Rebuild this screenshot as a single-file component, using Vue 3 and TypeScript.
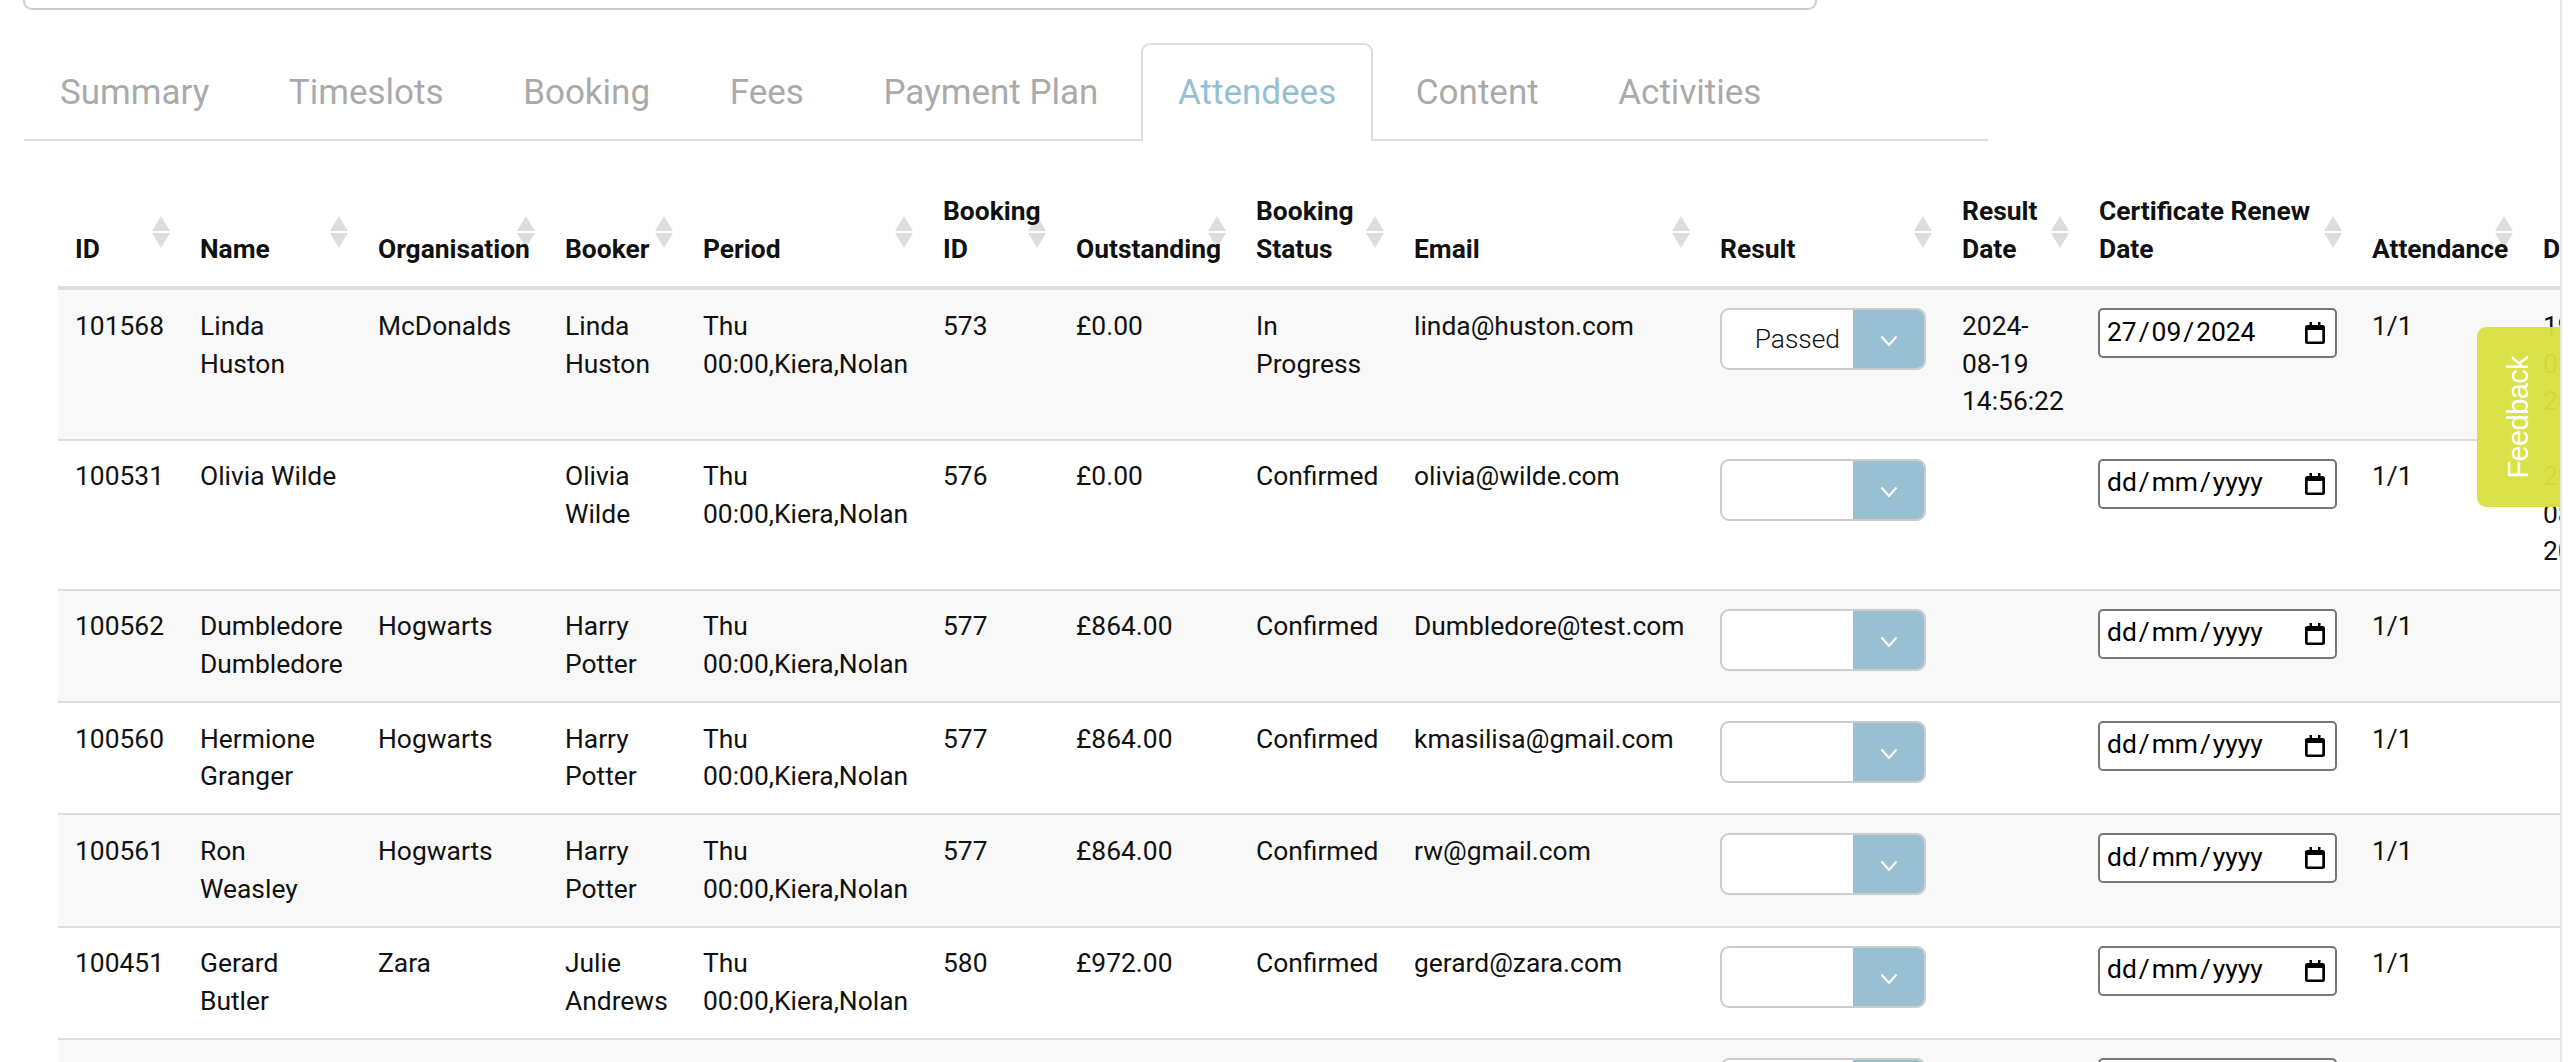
<script setup lang="ts">
interface Col { label: string[]; width: number }
interface Row { id: string; name: string[]; org: string; booker: string[]; bid: string; out: string; status: string[]; email: string; result: string; rdate: string[]; date: string[]; att: string; last: string[] }

const cols: Col[] = [
  { label: ['ID'], width: 125 },
  { label: ['Name'], width: 178 },
  { label: ['Organisation'], width: 187 },
  { label: ['Booker'], width: 138 },
  { label: ['Period'], width: 240 },
  { label: ['Booking', 'ID'], width: 133 },
  { label: ['Outstanding'], width: 180 },
  { label: ['Booking', 'Status'], width: 158 },
  { label: ['Email'], width: 306 },
  { label: ['Result'], width: 242 },
  { label: ['Result', 'Date'], width: 137 },
  { label: ['Certificate Renew', 'Date'], width: 273 },
  { label: ['Attendance'], width: 171 },
  { label: ['Date'], width: 160 }
]

const blank = ['dd', 'mm', 'yyyy']
const rows: Row[] = [
  { id: '101568', name: ['Linda', 'Huston'], org: 'McDonalds', booker: ['Linda', 'Huston'], bid: '573', out: '£0.00', status: ['In', 'Progress'], email: 'linda@huston.com', result: 'Passed', rdate: ['2024-', '08-19', '14:56:22'], date: ['27', '09', '2024'], att: '1/1', last: ['19-', '08-', '2024'] },
  { id: '100531', name: ['Olivia Wilde'], org: '', booker: ['Olivia', 'Wilde'], bid: '576', out: '£0.00', status: ['Confirmed'], email: 'olivia@wilde.com', result: '', rdate: [], date: blank, att: '1/1', last: ['20-', '08-', '2024'] },
  { id: '100562', name: ['Dumbledore', 'Dumbledore'], org: 'Hogwarts', booker: ['Harry', 'Potter'], bid: '577', out: '£864.00', status: ['Confirmed'], email: 'Dumbledore@test.com', result: '', rdate: [], date: blank, att: '1/1', last: [] },
  { id: '100560', name: ['Hermione', 'Granger'], org: 'Hogwarts', booker: ['Harry', 'Potter'], bid: '577', out: '£864.00', status: ['Confirmed'], email: 'kmasilisa@gmail.com', result: '', rdate: [], date: blank, att: '1/1', last: [] },
  { id: '100561', name: ['Ron', 'Weasley'], org: 'Hogwarts', booker: ['Harry', 'Potter'], bid: '577', out: '£864.00', status: ['Confirmed'], email: 'rw@gmail.com', result: '', rdate: [], date: blank, att: '1/1', last: [] },
  { id: '100451', name: ['Gerard', 'Butler'], org: 'Zara', booker: ['Julie', 'Andrews'], bid: '580', out: '£972.00', status: ['Confirmed'], email: 'gerard@zara.com', result: '', rdate: [], date: blank, att: '1/1', last: [] },
  { id: '', name: [], org: '', booker: [], bid: '', out: '', status: [], email: '', result: '', rdate: [], date: blank, att: '', last: [] }
]

const tabs = ['Summary', 'Timeslots', 'Booking', 'Fees', 'Payment Plan', 'Attendees', 'Content', 'Activities']
const activeTab = 'Attendees'
const tableWidth = cols.reduce((s, c) => s + c.width, 0)
</script>

<template>
  <div class="page">
    <div class="frame">
      <div class="top-box"></div>

      <nav class="tabs">
        <a v-for="t in tabs" :key="t" class="tab" :class="{ active: t === activeTab }">{{ t }}</a>
      </nav>

      <div class="table-wrap">
        <table :style="{ width: tableWidth + 'px' }">
          <colgroup>
            <col v-for="c in cols" :key="c.label.join()" :style="{ width: c.width + 'px' }" />
          </colgroup>
          <thead>
            <tr>
              <th v-for="(c, i) in cols" :key="c.label.join()">
                <span v-if="i < cols.length - 1" class="sort"><i class="up"></i><i class="down"></i></span>
                <div v-for="l in c.label" :key="l" class="th-line">{{ l }}</div>
              </th>
            </tr>
          </thead>
          <tbody>
            <tr v-for="(r, idx) in rows" :key="idx">
              <td>{{ r.id }}</td>
              <td><div v-for="n in r.name" :key="n">{{ n }}</div></td>
              <td>{{ r.org }}</td>
              <td><div v-for="n in r.booker" :key="n">{{ n }}</div></td>
              <td><template v-if="r.id"><div>Thu</div><div>00:00,Kiera,Nolan</div></template></td>
              <td>{{ r.bid }}</td>
              <td>{{ r.out }}</td>
              <td><div v-for="n in r.status" :key="n">{{ n }}</div></td>
              <td>{{ r.email }}</td>
              <td>
                <div class="select">
                  <span class="select-value">{{ r.result }}</span>
                  <span class="select-btn">
                    <svg width="18" height="12" viewBox="0 0 18 12"><path d="M1.5 1.5 L9 10 L16.5 1.5" fill="none" stroke="#fff" stroke-width="2" /></svg>
                  </span>
                </div>
              </td>
              <td><div v-for="n in r.rdate" :key="n">{{ n }}</div></td>
              <td>
                <div class="date">
                  <span class="date-text">
                    <span>{{ r.date[0] }}</span><span class="sl">/</span><span>{{ r.date[1] }}</span><span class="sl">/</span><span>{{ r.date[2] }}</span>
                  </span>
                  <svg class="cal" width="20" height="22" viewBox="0 0 20 22">
                    <path d="M4.5 0 h2.5 v3 h6 v-3 h2.5 v3 h2 a2.5 2.5 0 0 1 2.5 2.5 v14 a2.5 2.5 0 0 1 -2.5 2.5 h-15 a2.5 2.5 0 0 1 -2.5 -2.5 v-14 a2.5 2.5 0 0 1 2.5 -2.5 h2 z M2.7 8 v11 a.5 .5 0 0 0 .5 .5 h13.6 a.5 .5 0 0 0 .5 -.5 v-11 z" fill="#000" fill-rule="evenodd" />
                  </svg>
                </div>
              </td>
              <td>{{ r.att }}</td>
              <td><div v-for="n in r.last" :key="n">{{ n }}</div></td>
            </tr>
          </tbody>
        </table>
      </div>
    </div>

    <div class="feedback"><span>Feedback</span></div>
  </div>
</template>

<style scoped>
.page {
  position: relative;
  width: 2568px;
  height: 1062px;
  overflow: hidden;
  background: #fff;
  font-family: Roboto, "Liberation Sans", sans-serif;
  font-size: 26.4px;
  color: #111;
}
.frame {
  box-sizing: border-box;
  width: 2562px;
  height: 1062px;
  overflow: hidden;
  border-right: 2px solid #e8e8e8;
}
.top-box {
  box-sizing: border-box;
  width: 1794px;
  height: 10px;
  margin-left: 23px;
  border: 2px solid #ccc;
  border-top: 0;
  border-radius: 0 0 9px 9px;
}
.tabs {
  display: flex;
  box-sizing: border-box;
  width: 1964px;
  height: 98px;
  margin: 33px 0 0 24px;
  border-bottom: 2px solid #ddd;
}
.tab {
  box-sizing: border-box;
  height: 98px;
  margin-right: 5.6px;
  padding: 23px 35px 0;
  border: 2px solid transparent;
  border-bottom: 0;
  border-radius: 9px 9px 0 0;
  font-size: 35px;
  line-height: 50px;
  color: #aaa;
  white-space: nowrap;
}
.tab:first-child {
  margin-left: -1px;
}
.tab.active {
  border-color: #ddd;
  background: #fff;
  color: #96bfd2;
}
.table-wrap {
  width: 2502px;
  margin: 35px 0 0 58px;
  overflow: hidden;
}
table {
  table-layout: fixed;
  border-collapse: separate;
  border-spacing: 0;
  line-height: 37.7px;
}
th {
  position: relative;
  padding: 17px 17px 18px;
  border-bottom: 4px solid #ddd;
  text-align: left;
  vertical-align: bottom;
  font-weight: 700;
  white-space: nowrap;
}
.th-line {
  position: relative;
}
td {
  padding: 17.5px 17px;
  border-bottom: 2px solid #ddd;
  vertical-align: top;
  white-space: nowrap;
}
tbody tr:nth-child(odd) td {
  background: #f8f8f8;
}
.sort {
  position: absolute;
  right: 13px;
  top: 40px;
  display: flex;
  flex-direction: column;
  gap: 2px;
}
.sort i {
  display: block;
  width: 0;
  height: 0;
  border-left: 9px solid transparent;
  border-right: 9px solid transparent;
}
.sort .up { border-bottom: 15px solid #ddd; }
.sort .down { border-top: 15px solid #ddd; }
.select {
  display: flex;
  box-sizing: border-box;
  width: 206px;
  height: 62px;
  margin-top: 0.5px;
  overflow: hidden;
  border: 2px solid #ccc;
  border-radius: 9px;
  background: #fff;
}
.select-value {
  flex: 1;
  padding-right: 13px;
  text-align: right;
  line-height: 58px;
  font-weight: 300;
}
.select-btn {
  display: flex;
  align-items: center;
  justify-content: center;
  width: 71px;
  padding-top: 4px;
  box-sizing: border-box;
  background: #99c0d2;
}
.date {
  display: flex;
  align-items: center;
  justify-content: space-between;
  box-sizing: border-box;
  width: 239px;
  height: 50px;
  margin: 0.5px 0 0 -1px;
  padding: 0 10px 0 7px;
  border: 2px solid #767676;
  border-radius: 5px;
  background: #fff;
  color: #000;
}
.date-text {
  display: flex;
  margin-top: -2px;
}
.sl {
  padding: 0 2px;
}
.cal {
  flex: none;
}
.feedback {
  position: absolute;
  left: 2477px;
  top: 327px;
  display: flex;
  align-items: center;
  justify-content: center;
  width: 83px;
  height: 180px;
  border-radius: 9px 0 0 9px;
  background: rgba(218, 224, 65, 0.96);
  color: #fff;
  font-family: "Liberation Sans", Arial, sans-serif;
  font-size: 29px;
  letter-spacing: -0.6px;
}
.feedback span {
  writing-mode: vertical-rl;
  transform: rotate(180deg);
}
</style>
